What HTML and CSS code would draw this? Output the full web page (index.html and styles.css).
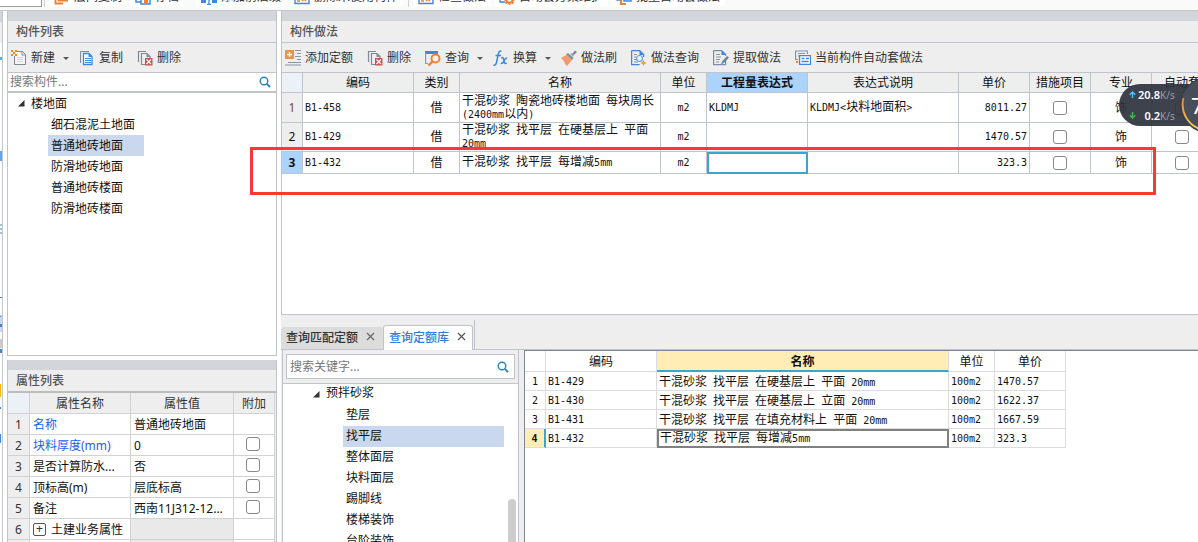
FILE: index.html
```html
<!DOCTYPE html>
<html lang="zh-CN">
<head>
<meta charset="utf-8">
<title>构件做法</title>
<link rel="stylesheet" href="styles.css">
</head>
<body>
<svg class="defs" aria-hidden="true">
  <symbol id="i-search" viewBox="0 0 12 12"><circle cx="5" cy="5" r="3.8" fill="none" stroke="#2a86b8" stroke-width="1.4"/><path d="M7.8 7.8 11 11" stroke="#2a86b8" stroke-width="1.9"/></symbol>
  <symbol id="i-new" viewBox="0 0 16 16"><path d="M3.5 6v8.500h11V4.500l-3-3H6" fill="#f6f4f8" stroke="#7d8b96"/><path d="M11 1.500v3.500h3.500" fill="none" stroke="#7d8b96"/><path d="M6 7.500h6M6 9.500h6M6 11.500h6" stroke="#d8d2dc"/><path d="M0 0h2v2H0zM4 0h2v2H4zM2 2h2v2H2zM0 4h2v2H0zM4 4h2v2H4z" fill="#f08a1c"/></symbol>
  <symbol id="i-copy" viewBox="0 0 16 16"><path d="M1.500 13V1.500H10" fill="none" stroke="#7d8b96"/><path d="M4.500 3.500H10l3 3v8H4.500z" fill="#fff" stroke="#3f87da" stroke-width="1.300"/><path d="M9.500 3.500v3.500H13z" fill="#3f87da"/><path d="M6 8.500h6M6 10.500h6M6 12.500h6" stroke="#3f87da"/></symbol>
  <symbol id="i-del" viewBox="0 0 16 16"><path d="M1.500 12V1.500H9M8 14.500H4.500v-11H10l3 3V8" fill="none" stroke="#7d8b96" stroke-width="1.200"/><path d="M9.500 3v4H13z" fill="#7d8b96"/><path d="M8 8h7.500v7.500H8z" fill="#d0504f"/><path d="m9.500 9.500 4.500 4.500M14 9.500 9.500 14" stroke="#fff" stroke-width="1.200"/></symbol>
  <symbol id="i-add" viewBox="0 0 16 16"><path d="M0 0h9v9H0z" fill="#ee9440"/><path d="M4.500 2v5M2 4.500h5" stroke="#fff" stroke-width="1.300"/><path d="M10 .5h6M12 3.500h4M10 6.500h6M12 9.500h4M3 12.500h13M0 15h16" stroke="#8b949c"/></symbol>
  <symbol id="i-query" viewBox="0 0 16 16"><path d="M0 1h13v3H0z" fill="#3f87da"/><path d="M.6 3v10.500h2.500" fill="none" stroke="#8b9db0" stroke-width="1.200"/><circle cx="10.500" cy="8.500" r="4" fill="#fbf4ee" stroke="#ee8034" stroke-width="1.900"/><path d="m7.500 11.500-4 4" stroke="#ee8034" stroke-width="2.400"/></symbol>
  <symbol id="i-fx" viewBox="0 0 16 16"><path d="M8.500 1.500C6.500 0 5.600 2.500 5.200 4.500L3.500 12.500C3 15 1.500 15.800.5 14.800M2.500 5.500h5.500M8.300 8c2-1.300 2.200 1 2.700 3s.9 3.400 2.700 2M14.300 8c-2-.7-2.700 2-3.600 3.500S9 14 7.800 13.200" fill="none" stroke="#3f87da" stroke-width="1.500"/></symbol>
  <symbol id="i-brush" viewBox="0 0 16 16"><path d="m0 8 5-3 6 5-5 6-2-2-1-3z" fill="#f69a6c"/><path d="m5 4.500 2-1.500 5.500 5-1.500 2z" fill="#7f8c96"/><path d="m9 4 1.500-1 2.500 2-1 2z" fill="#a2adb5"/><path d="m11 4 3-3.500 2 1.500-3 3z" fill="#7b8993"/></symbol>
  <symbol id="i-find" viewBox="0 0 16 16"><path d="M.6.600h8l4 4V7M.6.600v14h8" fill="none" stroke="#3f87da" stroke-width="1.300"/><path d="M8.500 0v5h5z" fill="#3f87da"/><path d="M3 4.500h3M3 7h2M3 9.500h2M3 12h4" stroke="#8b949c"/><circle cx="8.500" cy="8.500" r="3" fill="#eaf3fc" stroke="#6b9fd6" stroke-width="1.200"/><path d="m12.500 10 1 2 2 1-2 1-1 2-1-2-2-1 2-1z" fill="#f59a1c"/></symbol>
  <symbol id="i-extract" viewBox="0 0 16 16"><path d="M.6.600h8l4 4V6M.6.600v14h12V11" fill="none" stroke="#7590b0" stroke-width="1.200"/><path d="M8.500 0v5h5z" fill="#3f87da"/><path d="M3 4.500h4M3 7h5M3 9.500h4M3 12h3" stroke="#8b949c"/><path d="m8 14 1.500-3L14 6l2 1.500-5 5.500z" fill="#6f838f"/><path d="m8 14 1.500-3 1.500 1.500z" fill="#35b6d8"/></symbol>
  <symbol id="i-auto" viewBox="0 0 16 16"><path d="M3 9.500H.6V1h11.800v3" fill="none" stroke="#8b949c" stroke-width="1.200"/><path d="M3 3.500h7M3 6h2" stroke="#8b949c"/><path d="M4.600 5.600h11v8.800h-11z" fill="#fff" stroke="#3f87da" stroke-width="1.300"/><path d="M6.500 8.500h3M6.500 11.500h7M11 8.500h3" stroke="#3f87da" stroke-width="1.500"/><path d="M1 11h2v2H1z" fill="#ee8034"/></symbol>
  <symbol id="i-layers" viewBox="0 0 16 16"><path d="M1.500 3v11.500H9M4.500 1v10.500H14" fill="none" stroke="#ee8034" stroke-width="1.800"/></symbol>
  <symbol id="i-batch" viewBox="0 0 16 16"><path d="M1 2v9h4M8 3h7v9H8z" fill="#fff" stroke="#3f87da" stroke-width="1.500"/><path d="M5 2v13h5" fill="none" stroke="#ee8034" stroke-width="2"/></symbol>
  <symbol id="i-save" viewBox="0 0 16 16"><path d="M1 4v9h5M6 7v8h9V7z" fill="#fff" stroke="#3f87da" stroke-width="1.500"/><path d="M9 11h4v4H9z" fill="#ee8034"/></symbol>
  <symbol id="i-affix" viewBox="0 0 16 16"><path d="M0 6h5v8H0zM11 6h5v8h-5z" fill="#3f87da"/><path d="M8 2v13M6 15.500h4" stroke="#3f87da" stroke-width="1.300"/></symbol>
  <symbol id="i-check" viewBox="0 0 16 16"><path d="M1 2h14v12.500H1z" fill="#fff" stroke="#3f87da" stroke-width="1.400"/><path d="M3 12h3M8 8l4 4M12 8l-4 4" stroke="#ee8034" stroke-width="1.600"/></symbol>
  <symbol id="i-gear" viewBox="0 0 16 16"><path d="M1 2v11h5" fill="none" stroke="#3f87da" stroke-width="1.400"/><circle cx="10.500" cy="10.500" r="3.300" fill="#fff" stroke="#ee8034" stroke-width="2.200"/><path d="M10.500 5v2M10.500 14v2M5 10.500h2M14 10.500h2M6.500 14.500 8 13M14.500 14.500 13 13" stroke="#ee8034" stroke-width="1.800"/></symbol>
</svg>

<nav class="ribbon">
  <span class="ribbon-box"></span><span class="ribbon-sep"></span>
  <button><svg><use href="#i-layers"/></svg>层间复制</button>
  <button><svg><use href="#i-save"/></svg>存档</button>
  <button class="wide"><svg><use href="#i-affix"/></svg>添加前后缀</button>
  <button><svg><use href="#i-check"/></svg>删除未使用构件</button>
  <span class="ribbon-sep"></span>
  <button><svg><use href="#i-check"/></svg>检查做法</button>
  <button><svg><use href="#i-gear"/></svg>自动套方案维护</button>
  <button><svg><use href="#i-batch"/></svg>批量自动套做法</button>
</nav>

<div class="workspace">
  <div class="rail">
    <svg viewBox="0 0 2 531" aria-hidden="true"><path d="M0 0h2v11H0z" fill="#d3d5db"/><path d="M0 11h2v21H0z" fill="#eee"/><path d="M0 46h2v3H0z" fill="#4fb4ef"/><path d="M0 140h2v10H0z" fill="#5aa7f2"/><path d="M0 214h2M0 218h2M0 222h2" stroke="#3f87a8"/><path d="M0 286h2v1H0z" fill="#3f87da"/><path d="M0 304h2v17H0z" fill="#c9d8ef"/><path d="M0 305h1v1H0zM0 313h2v3H0zM0 338h2v4H0zM0 396h1v2H0zM0 423h1v9H0z" fill="#3f87da"/><path d="M0 328h2v9H0z" fill="#ccc"/><path d="M0 373h1v13H0z" fill="#ffb400"/></svg>
  </div>

  <aside class="left">
    <section class="panel list-panel">
      <div class="band"></div>
      <h2>构件列表</h2>
      <div class="toolbar">
        <button><svg><use href="#i-new"/></svg>新建<i class="caret"></i></button>
        <button><svg><use href="#i-copy"/></svg>复制</button>
        <button><svg><use href="#i-del"/></svg>删除</button>
      </div>
      <div class="search"><input type="text" aria-label="搜索构件" placeholder="搜索构件..."><svg><use href="#i-search"/></svg></div>
      <ul class="tree">
        <li class="root"><svg viewBox="0 0 7 7"><path d="M6.500 0v6.500H0z" fill="#333"/></svg>楼地面</li>
        <li><span>细石混泥土地面</span></li>
        <li><span class="sel">普通地砖地面</span></li>
        <li><span>防滑地砖地面</span></li>
        <li><span>普通地砖楼面</span></li>
        <li><span>防滑地砖楼面</span></li>
      </ul>
    </section>

    <section class="panel props-panel">
      <div class="band"></div>
      <h2>属性列表</h2>
      <table class="props">
        <colgroup><col class="w22"><col class="w101"><col class="w103"><col class="w41"></colgroup>
        <tr><th class="corner"></th><th>属性名称</th><th>属性值</th><th>附加</th></tr>
        <tr><th>1</th><td class="link">名称</td><td>普通地砖地面</td><td></td></tr>
        <tr><th>2</th><td class="link">块料厚度(mm)</td><td>0</td><td class="mid"><input type="checkbox" aria-label="附加 块料厚度"></td></tr>
        <tr><th>3</th><td>是否计算防水...</td><td>否</td><td class="mid"><input type="checkbox" aria-label="附加 是否计算防水"></td></tr>
        <tr><th>4</th><td>顶标高(m)</td><td>层底标高</td><td class="mid"><input type="checkbox" aria-label="附加 顶标高"></td></tr>
        <tr><th>5</th><td>备注</td><td>西南11J312-12...</td><td class="mid"><input type="checkbox" aria-label="附加 备注"></td></tr>
        <tr><th>6</th><td><button class="expand" aria-label="展开">+</button>土建业务属性</td><td class="off"></td><td></td></tr>
        <tr><th></th><td></td><td class="off"></td><td></td></tr>
      </table>
    </section>
  </aside>

  <main class="right">
    <section class="methods">
      <div class="band"></div>
      <h2>构件做法</h2>
      <div class="toolbar">
        <button><svg><use href="#i-add"/></svg>添加定额</button>
        <button><svg><use href="#i-del"/></svg>删除</button>
        <button><svg><use href="#i-query"/></svg>查询<i class="caret"></i></button>
        <button><svg><use href="#i-fx"/></svg>换算<i class="caret"></i></button>
        <button><svg><use href="#i-brush"/></svg>做法刷</button>
        <button><svg><use href="#i-find"/></svg>做法查询</button>
        <button><svg><use href="#i-extract"/></svg>提取做法</button>
        <button><svg><use href="#i-auto"/></svg>当前构件自动套做法</button>
      </div>
      <div class="grid-wrap">
        <table class="grid">
          <colgroup><col class="w21"><col class="w111"><col class="w46"><col class="w201"><col class="w46"><col class="w101"><col class="w151"><col class="w71"><col class="w61"><col class="w61"><col class="w61"></colgroup>
          <tr class="head"><th class="corner"></th><th>编码</th><th>类别</th><th>名称</th><th>单位</th><th class="cur">工程量表达式</th><th>表达式说明</th><th>单价</th><th>措施项目</th><th>专业</th><th>自动套</th></tr>
          <tr class="tall"><th class="warm">1</th><td class="n">B1-458</td><td class="mid">借</td><td>干混砂浆<span class="n">&nbsp;</span>陶瓷地砖楼地面<span class="n">&nbsp;</span>每块周长<br><span class="n">(2400mm</span>以内<span class="n">)</span></td><td class="mid n">m2</td><td class="n">KLDMJ</td><td><span class="n">KLDMJ&lt;</span>块料地面积<span class="n">&gt;</span></td><td class="num n">8011.27</td><td class="mid"><input type="checkbox" aria-label="措施项目 1"></td><td class="mid">饰</td><td class="mid"><input type="checkbox" aria-label="自动套 1"></td></tr>
          <tr class="tall"><th>2</th><td class="n">B1-429</td><td class="mid">借</td><td>干混砂浆<span class="n">&nbsp;</span>找平层<span class="n">&nbsp;</span>在硬基层上<span class="n">&nbsp;</span>平面<br><span class="n">20mm</span></td><td class="mid n">m2</td><td></td><td></td><td class="num n">1470.57</td><td class="mid"><input type="checkbox" aria-label="措施项目 2"></td><td class="mid">饰</td><td class="mid"><input type="checkbox" aria-label="自动套 2"></td></tr>
          <tr><th class="cur">3</th><td class="n">B1-432</td><td class="mid">借</td><td>干混砂浆<span class="n">&nbsp;</span>找平层<span class="n">&nbsp;</span>每增减<span class="n">5mm</span></td><td class="mid n">m2</td><td class="edit"></td><td></td><td class="num n">323.3</td><td class="mid"><input type="checkbox" aria-label="措施项目 3"></td><td class="mid">饰</td><td class="mid"><input type="checkbox" aria-label="自动套 3"></td></tr>
        </table>
      </div>
    </section>

    <section class="query">
      <div class="tabs">
        <div class="tab">查询匹配定额<button aria-label="关闭"><svg viewBox="0 0 9 9"><path d="m1 1 7 7M8 1 1 8" stroke="#666" stroke-width="1.200"/></svg></button></div>
        <div class="tab active">查询定额库<button aria-label="关闭"><svg viewBox="0 0 9 9"><path d="m1 1 7 7M8 1 1 8" stroke="#555" stroke-width="1.200"/></svg></button></div>
        <div class="tabs-end"></div>
      </div>
      <div class="query-body">
        <div class="quota-tree">
          <div class="quota-search"><div class="box"><input type="text" aria-label="搜索关键字" placeholder="搜索关键字..."><svg><use href="#i-search"/></svg></div></div>
          <div class="scroll">
            <ul class="tree">
              <li class="root"><svg viewBox="0 0 7 7"><path d="M6.500 0v6.500H0z" fill="#333"/></svg>预拌砂浆</li>
              <li><span>垫层</span></li>
              <li><span class="sel">找平层</span></li>
              <li><span>整体面层</span></li>
              <li><span>块料面层</span></li>
              <li><span>踢脚线</span></li>
              <li><span>楼梯装饰</span></li>
              <li><span>台阶装饰</span></li>
            </ul>
            <div class="thumb"></div>
          </div>
        </div>
        <div class="quota-wrap">
          <table class="quota">
            <colgroup><col class="w21"><col class="w111"><col class="w292"><col class="w46"><col class="w71"></colgroup>
            <tr class="head"><th></th><th>编码</th><th class="cur">名称</th><th>单位</th><th>单价</th></tr>
            <tr><th class="n">1</th><td class="n">B1-429</td><td>干混砂浆<span class="n">&nbsp;</span>找平层<span class="n">&nbsp;</span>在硬基层上<span class="n">&nbsp;</span>平面<span class="n">&nbsp;20mm</span></td><td class="n">100m2</td><td class="n">1470.57</td></tr>
            <tr><th class="n">2</th><td class="n">B1-430</td><td>干混砂浆<span class="n">&nbsp;</span>找平层<span class="n">&nbsp;</span>在硬基层上<span class="n">&nbsp;</span>立面<span class="n">&nbsp;20mm</span></td><td class="n">100m2</td><td class="n">1622.37</td></tr>
            <tr><th class="n">3</th><td class="n">B1-431</td><td>干混砂浆<span class="n">&nbsp;</span>找平层<span class="n">&nbsp;</span>在填充材料上<span class="n">&nbsp;</span>平面<span class="n">&nbsp;20mm</span></td><td class="n">100m2</td><td class="n">1667.59</td></tr>
            <tr><th class="n cur">4</th><td class="n">B1-432</td><td class="edit">干混砂浆<span class="n">&nbsp;</span>找平层<span class="n">&nbsp;</span>每增减<span class="n">5mm</span></td><td class="n">100m2</td><td class="n">323.3</td></tr>
          </table>
        </div>
      </div>
    </section>
  </main>
</div>

<div class="marker"></div>
<div class="netspeed">
  <div class="pill">
    <div><svg viewBox="0 0 7 7"><path d="M3.500 7V1M.7 3.700 3.500 1l2.800 2.700" fill="none" stroke="#4fc0f5" stroke-width="1.500"/></svg><b>20.8</b><span>K/s</span></div>
    <div><svg viewBox="0 0 7 7"><path d="M3.500 0v6M.7 3.300 3.500 6l2.800-2.700" fill="none" stroke="#3dbb4c" stroke-width="1.500"/></svg><b>0.2</b><span>K/s</span></div>
  </div>
  <div class="ball">
    <svg viewBox="0 0 56 56"><defs><linearGradient id="arc" x1="0" y1="0" x2="0" y2="1"><stop offset="0" stop-color="#f0813c"/><stop offset="1" stop-color="#f3d648"/></linearGradient></defs><circle cx="28" cy="28" r="27.500" fill="#484d5a" stroke="#333844"/><path d="M3.500 21a26 26 0 0 0 18 31.500" fill="none" stroke="url(#arc)" stroke-width="1.800"/></svg>
    <b>71</b>
  </div>
</div>
</body>
</html>
```

FILE: styles.css
```css
* { box-sizing: border-box; }
body {
  margin: 0;
  height: 100vh;
  position: relative;
  display: flex;
  flex-direction: column;
  overflow: hidden;
  background: #fff;
  color: #111;
  font: 12px/16px "Noto Sans", "Noto Sans CJK SC", sans-serif;
}
.defs { display: none; }
button {
  border: 0;
  padding: 0;
  background: none;
  color: #333;
  font: inherit;
}
input { font: inherit; }
input[type="checkbox"] {
  appearance: none;
  display: block;
  width: 14px;
  height: 14px;
  margin: 0 auto;
  border: 1px solid #888;
  border-radius: 3px;
  background: #fff;
}
h2 {
  margin: 0;
  height: 22px;
  padding-left: 8px;
  border-bottom: 1px solid #c0c4ca;
  background: #eee;
  color: #555;
  font-size: 12px;
  font-weight: 500;
  line-height: 22px;
}
table {
  border-collapse: separate;
  border-spacing: 0;
  table-layout: fixed;
}
th, td {
  padding: 0;
  overflow: hidden;
  white-space: nowrap;
  font-weight: 400;
}
td { text-align: left; }
.mid { text-align: center; }
.n { font-family: "DejaVu Sans Mono", monospace; font-size: 10px; }

.w21 { width: 21px; }
.w22 { width: 22px; }
.w41 { width: 41px; }
.w46 { width: 46px; }
.w61 { width: 61px; }
.w71 { width: 71px; }
.w101 { width: 101px; }
.w103 { width: 103px; }
.w111 { width: 111px; }
.w151 { width: 151px; }
.w201 { width: 201px; }
.w292 { width: 292px; }

/* ribbon */
.ribbon {
  flex: none;
  display: flex;
  align-items: flex-end;
  height: 11px;
  overflow: hidden;
  padding-bottom: 3px;
  border-bottom: 1px solid #c4c7cd;
  background: #fafafa;
}
.ribbon button {
  display: flex;
  align-items: center;
  gap: 4px;
  height: 20px;
  margin-right: 3px;
  padding: 0 5px;
  border-radius: 3px;
  background: #fff;
  white-space: nowrap;
}
.ribbon button.wide { margin-left: 9px; }
.ribbon svg { width: 16px; height: 16px; }
.ribbon-box {
  width: 42px;
  height: 20px;
  border: 1px solid #999;
  border-left: 0;
  background: #fff;
}
.ribbon-sep {
  width: 1px;
  height: 20px;
  margin: 0 4px 0 2px;
  background: #d0d0d0;
}

/* frame */
.workspace { flex: 1; min-height: 0; display: flex; }
.rail {
  flex: none;
  width: 3px;
  border-right: 1px solid #c4c7cd;
}
.rail svg { display: block; width: 2px; height: 531px; }
.left {
  flex: none;
  width: 270px;
  margin: 0 4px;
  display: flex;
  flex-direction: column;
  gap: 4px;
}
.panel {
  border: 1px solid #c0c4ca;
  border-top: 0;
  display: flex;
  flex-direction: column;
}
.list-panel { flex: 1; min-height: 0; }
.props-panel { flex: none; height: 182px; overflow: hidden; border-bottom: 0; background: #eee; }
.props-panel h2 { height: 23px; border-bottom: 2px solid #bdbdbd; }
.band { flex: none; height: 10px; background: #d3d5db; }
.toolbar {
  flex: none;
  display: flex;
  align-items: center;
  gap: 14px;
  height: 30px;
  padding-left: 3px;
  border-bottom: 1px solid #c0c4ca;
  background: #eee;
}
.toolbar button { display: flex; align-items: center; gap: 4px; white-space: nowrap; }
.toolbar svg { width: 16px; height: 16px; }
.caret {
  margin: 2px -4px 0 4px;
  border: 3px solid transparent;
  border-top-color: #555;
  border-bottom: 0;
}
.search {
  flex: none;
  display: flex;
  align-items: center;
  height: 20px;
  padding: 0 5px 0 2px;
  border-bottom: 2px solid #c0c4ca;
}
.search input, .box input {
  flex: 1;
  min-width: 0;
  border: 0;
  padding: 0;
  outline: 0;
  background: none;
}
input::placeholder { color: #777; opacity: 1; }
.search svg, .box svg { width: 12px; height: 12px; }

.tree {
  margin: 0;
  padding: 0;
  list-style: none;
  color: #111;
}
.tree li { display: flex; height: 21px; padding-left: 40px; }
.tree li span { padding: 0 3px; line-height: 22px; }
.tree li.root { align-items: center; gap: 6px; padding-left: 10px; line-height: 20px; }
.tree .root svg { width: 7px; height: 7px; }
.tree .sel { height: 21px; background: #c9d8ef; }
.list-panel .sel { width: 96px; }

/* property table */
.props { width: 267px; }
.props th, .props td {
  height: 21px;
  padding-top: 1px;
  border-right: 1px solid #d2d2d2;
  border-bottom: 1px solid #d2d2d2;
  line-height: 19px;
}
.props th { background: #eee; color: #333; }
.props td { padding-left: 3px; background: #fff; }
.props td.mid { padding: 0 2px 2px 0; }
.props .corner { background: #ecf1f7; }
.props .link { color: #1a5ff0; }
.props td.off { background: #e9e9e9; }
.expand {
  width: 13px;
  height: 13px;
  margin-right: 5px;
  border: 1px solid #555;
  border-radius: 2px;
  background: #fff;
  line-height: 10px;
  vertical-align: 1px;
}

/* methods table */
.right {
  flex: 1;
  min-width: 0;
  display: flex;
  flex-direction: column;
  background: #eee;
}
.methods {
  flex: 1;
  min-height: 0;
  display: flex;
  flex-direction: column;
  border-left: 1px solid #c0c4ca;
  border-bottom: 1px solid #c0c4ca;
  background: #fff;
}
.grid-wrap { flex: 1; overflow: hidden; }
.grid { width: 931px; }
.grid th, .grid td {
  height: 22px;
  border-right: 1px solid #c0c4cc;
  border-bottom: 1px solid #c0c4cc;
  line-height: 12px;
}
.grid td { padding-left: 2px; }
.grid td.mid { padding: 0; }
.grid td.num { padding-right: 2px; text-align: right; }
.grid th { background: #eee; }
.grid .head th { height: 20px; padding-top: 1px; }
.grid .tall th { height: 30px; }
.grid .tall + .tall th { height: 29px; }
.grid th.corner { background: #ecf1f7; }
.grid th.warm { color: #7a4a10; }
.grid th.cur { background: #abd3fc; font-weight: 700; }
.grid td.edit { border: 2px solid #3aa5cf; }

/* quota query */
.query { flex: none; height: 227px; display: flex; flex-direction: column; }
.tabs {
  flex: none;
  display: flex;
  align-items: flex-end;
  height: 35px;
  border-bottom: 1px solid #c0c4ca;
}
.tab {
  display: flex;
  align-items: center;
  gap: 8px;
  height: 22px;
  padding: 0 8px 0 5px;
  border-radius: 3px 3px 0 0;
  background: #dcdcdc;
  color: #333;
  font-weight: 500;
}
.tab button { padding-bottom: 4px; line-height: 0; }
.tab svg { width: 9px; height: 9px; }
.tab.active {
  height: 25px;
  padding: 0 6px 0 5px;
  margin-bottom: -1px;
  border: 1px solid #c0c4ca;
  border-bottom: 0;
  background: #fff;
  color: #2b7de0;
}
.tabs-end { width: 1px; height: 29px; margin-left: 1px; background: #c0c4ca; }
.query-body { flex: 1; min-height: 0; display: flex; }
.quota-tree {
  flex: none;
  width: 237px;
  margin: 0 5px 0 1px;
  border: 1px solid #c0c4ca;
  border-width: 0 1px;
  display: flex;
  flex-direction: column;
}
.quota-search {
  flex: none;
  height: 34px;
  padding: 4px 3px;
  border-bottom: 1px solid #c0c4ca;
}
.box {
  display: flex;
  align-items: center;
  height: 25px;
  padding: 0 5px 0 3px;
  border: 1px solid #c0c4ca;
  background: #fff;
}
.scroll {
  flex: 1;
  min-height: 0;
  display: flex;
  overflow: hidden;
  background: #fff;
}
.scroll .tree { flex: 1; }
.scroll .tree li { padding-left: 60px; }
.scroll .tree li span { line-height: 20px; }
.scroll .tree li.root { padding-left: 30px; line-height: 18px; align-items: flex-start; }
.scroll .root svg { margin-top: 7px; }
.scroll .sel { flex: 1; margin-right: 4px; }
.thumb {
  flex: none;
  width: 8px;
  margin: 115px 2px 0 0;
  border-radius: 4px 4px 0 0;
  background: #cdcdcd;
}
.quota-wrap {
  flex: 1;
  min-width: 0;
  overflow: hidden;
  border-left: 1px solid #7f8694;
  border-top: 1px solid #7f8694;
  background: #fff;
}
.quota { width: 541px; }
.quota th, .quota td {
  height: 19px;
  padding-top: 2px;
  border-right: 1px solid #dcdcdc;
  border-bottom: 1px solid #dcdcdc;
  line-height: 14px;
}
.quota td { padding-left: 2px; }
.quota .head th { height: 21px; }
.quota .head th.cur { border-bottom: 2px solid #3aa5cf; background: #ffedb5; font-weight: 700; }
.quota th.n.cur { border-right: 2px solid #3aa5cf; background: #ffedb5; font-weight: 700; }
.quota td.edit { padding: 0 0 0 1px; border: 2px solid #808080; }

/* overlays */
.marker {
  position: absolute;
  left: 250px;
  top: 147px;
  width: 906px;
  height: 48px;
  border: 3px solid #fc3735;
  pointer-events: none;
}
.netspeed {
  position: absolute;
  top: 77px;
  right: -38px;
  display: flex;
  align-items: center;
  color: #fff;
}
.pill {
  display: flex;
  flex-direction: column;
  justify-content: space-around;
  width: 88px;
  height: 42px;
  margin-right: -27px;
  padding-left: 10px;
  border-radius: 21px 0 0 21px;
  background: #2e323eeb;
}
.pill div { display: flex; align-items: center; }
.pill svg { width: 7px; height: 7px; }
.pill b { width: 24px; text-align: right; font-weight: 600; font-size: 11px; }
.pill span { color: #9a9da6; font-size: 10px; }
.ball { position: relative; width: 56px; height: 56px; }
.ball svg { display: block; }
.ball b {
  position: absolute;
  left: 11px;
  top: 16px;
  font: 22px/24px "Noto Sans", sans-serif;
}
```
